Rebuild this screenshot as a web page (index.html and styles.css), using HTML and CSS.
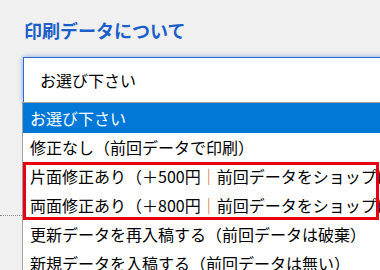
FILE: index.html
```html
<!DOCTYPE html>
<html lang="ja">
<head>
<meta charset="utf-8">
<title>印刷データについて</title>
<link rel="stylesheet" href="styles.css">
</head>
<body>
<div class="page">
  <h2 class="title">印刷データについて</h2>
  <div class="field">
    <div class="rule"></div>
    <div class="select">お選び下さい</div>
    <div class="list">
      <div class="opt selected">お選び下さい</div>
      <div class="opt">修正なし（前回データで印刷）</div>
      <div class="group">
        <div class="opt">片面修正あり（＋500円<span class="bar">｜</span>前回データをショップに修正依頼）</div>
        <div class="opt">両面修正あり（＋800円<span class="bar">｜</span>前回データをショップに修正依頼）</div>
      </div>
      <div class="opt">更新データを再入稿する（前回データは破棄）</div>
      <div class="opt">新規データを入稿する（前回データは無い）</div>
    </div>
  </div>
</div>
</body>
</html>
```

FILE: styles.css
```css
html, body {
  margin: 0;
  padding: 0;
  background: #f0f0f0;
  overflow: hidden;
  width: 380px;
  height: 270px;
}
body {
  font-family: "Noto Sans CJK JP", "Noto Sans", sans-serif;
  color: #111;
}
.page {
  padding: 20px 0 0 0;
}
.title {
  margin: 0 0 0 24px;
  font-size: 18px;
  line-height: 20px;
  font-weight: bold;
  color: #1c5fc9;
}
.field {
  position: relative;
  margin-top: 17px;
}
.rule {
  position: absolute;
  left: 0;
  top: 158px;
  width: 22px;
  border-top: 1px dotted #8a8a8a;
}
.select {
  margin-left: 23px;
  width: 420px;
  height: 45px;
  box-sizing: border-box;
  background: #fff;
  border: 1px solid #2f6ccf;
  border-bottom: none;
  box-shadow: 0 0 5px rgba(40, 100, 210, 0.55);
  padding-left: 16px;
  font-size: 16px;
  line-height: 44px;
  color: #000;
}
.list {
  position: relative;
  margin-left: 22px;
  width: 440px;
  background: #fff;
  border-top: 1px solid #a0a0a0;
  border-left: 1px solid #a0a0a0;
}
.opt {
  height: 29px;
  padding-left: 7px;
  font-size: 16px;
  line-height: 29px;
  white-space: nowrap;
  color: #000;
}
.opt.selected {
  height: 30px;
  line-height: 30px;
  background: #0078d7;
  color: #fff;
}
.bar {
  color: #d0731f;
  font-weight: bold;
}
.group {
  position: relative;
}
.group::after {
  content: "";
  position: absolute;
  left: 0;
  top: 0;
  width: 356px;
  height: 58px;
  box-sizing: border-box;
  border: 3px solid #e60012;
}
```
